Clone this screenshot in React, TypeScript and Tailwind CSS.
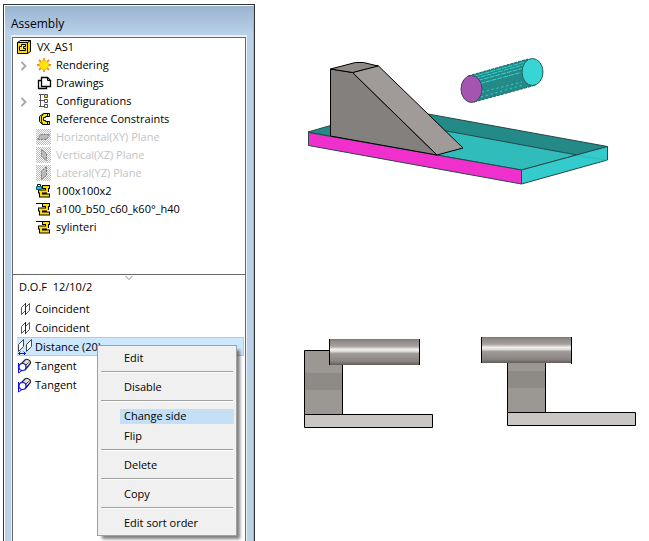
import { ReactNode, useState } from "react";

type IconName =
  | "assembly"
  | "sun"
  | "drawings"
  | "config"
  | "reference"
  | "planeXY"
  | "planeXZ"
  | "planeYZ"
  | "locked"
  | "part"
  | "coincident"
  | "distance"
  | "tangent";

// bent bracket, yellow core over a black outline
const Bracket = () => (
  <g fill="none">
    <path d="M6 4h8M11 4v5M2 8.500h9M5 8.500v4M3 12.500h11" stroke="#000" strokeWidth="4" />
    <path d="M7 4h6M11 4v4.500M3 8.500h9M5 8.500v4M4 12.500h9" stroke="#ffd90a" strokeWidth="2" />
  </g>
);

const Hatch = ({ id, children }: { id: string; children: ReactNode }) => (
  <>
    <defs>
      <pattern id={id} width="2" height="2" patternUnits="userSpaceOnUse">
        <path d="M0 0h1v1H0zM1 1h1v1H1z" fill="#bdbdbd" />
      </pattern>
    </defs>
    <path d="M0 0h15v16H0z" fill={`url(#${id})`} />
    {children}
  </>
);

const icons: Record<IconName, ReactNode> = {
  assembly: (
    <g stroke="#000" fill="#ffd90a">
      <path d="M.5 3.500l3-2h10v11l-3 2H.5z" />
      <path d="M10.500 14.500v-11l3-2M.5 3.500h10" fill="none" />
      <path d="M8.500 5.500h-4v2h-2v4h6v-2h-2v-2h2z" fill="#ffe94a" />
    </g>
  ),
  sun: (
    <>
      <path
        d="M8 1v14M1 8h14M3 3l10 10M13 3L3 13"
        stroke="#ff8a1c"
        strokeWidth="1.8"
      />
      <circle cx="8" cy="8" r="4.5" fill="#ffe900" stroke="#ffb31a" />
    </>
  ),
  drawings: (
    <g fill="#fff" stroke="#000">
      <path d="M2.5 5.500h8v8h-8z" strokeWidth="1.3" />
      <path d="M5.5 2.500h6l3 3v6h-9z" strokeWidth="1.3" />
      <path d="M11.5 2.500v3h3" fill="none" />
    </g>
  ),
  config: (
    <g fill="none" stroke="#555">
      <path d="M3 1.500h5M4.500 1v13M3 7.500h5M3 13.500h5" />
      <path d="M8.500 1.500h3v3h-3z" fill="#e9d91c" />
      <path d="M8.500 6.500h3v3h-3zM8.500 11.500h3v3h-3z" fill="#fff" />
    </g>
  ),
  reference: (
    <>
      <path
        d="M13.500 2.500h-6l-4 3v5l3 3h7v-3h-4v-1h-2v-3h2v-1h4z"
        fill="#f4e900"
        stroke="#000"
      />
      <path d="M7.500 2.500l-2 3v5l1 3M11.500 2.500v3M11.500 10.500v3" fill="none" stroke="#000" />
    </>
  ),
  planeXY: (
    <Hatch id="hatchXY">
      <path d="M1.500 10.500l3-5h9l-3 5z" fill="#bbb" stroke="#777" strokeDasharray="2 1" />
    </Hatch>
  ),
  planeXZ: (
    <Hatch id="hatchXZ">
      <path d="M5.500 2.500v7l5 4v-7z" fill="#bbb" stroke="#777" strokeDasharray="2 1" />
    </Hatch>
  ),
  planeYZ: (
    <Hatch id="hatchYZ">
      <path d="M5.500 6.500v8l5-4v-9z" fill="#bbb" stroke="#777" strokeDasharray="2 1" />
    </Hatch>
  ),
  locked: (
    <>
      <Bracket />
      <path d="M0 0h6v7H0z" fill="#fff" />
      <path d="M1.500 3.500v-2h3v2" fill="none" stroke="#111" />
      <path d="M.5 3.500h5v3h-5z" fill="#22c5cf" stroke="#075f68" />
    </>
  ),
  part: (
    <>
      <Bracket />
      <path d="M0 2.500h7" stroke="#000" />
    </>
  ),
  coincident: (
    <g fill="#fff">
      <path d="M8.500 6.500l4-4v7l-4 4z" stroke="#555" />
      <path d="M4.500 6.500l4-4v7l-4 4z" stroke="#555" />
      <path d="M8.500 2v12" stroke="#1010d8" />
    </g>
  ),
  distance: (
    <g fill="#fff">
      <path d="M1.500 5.500l5-5v7l-5 5zM9.500 5.500l5-5v7l-5 5z" stroke="#444" />
      <path d="M1.500 14.500h7M3.500 12.500l-2 2 2 2M6.500 12.500l2 2-2 2" fill="none" stroke="#1010e8" />
    </g>
  ),
  tangent: (
    <>
      <path
        d="M3 7l5-5c2-2 7 1 5 4l-5 6"
        fill="#ddd"
        stroke="#222"
        strokeWidth="1.2"
      />
      <path d="M11.500 4.500l-4 4" stroke="#444" />
      <path d="M1.500 5v10l10-7" fill="none" stroke="#1010d8" />
      <circle cx="5.500" cy="9" r="3.500" fill="#fff" stroke="#1010d8" strokeWidth="1.2" />
    </>
  ),
};

const Icon = ({ name }: { name: IconName }) => (
  <svg className="h-4 w-4 shrink-0" viewBox="0 0 16 16" aria-hidden="true">
    {icons[name]}
  </svg>
);

interface TreeItem {
  label: string;
  icon: IconName;
  expandable?: boolean;
  disabled?: boolean;
}

const treeItems: TreeItem[] = [
  { label: "Rendering", icon: "sun", expandable: true },
  { label: "Drawings", icon: "drawings" },
  { label: "Configurations", icon: "config", expandable: true },
  { label: "Reference Constraints", icon: "reference" },
  { label: "Horizontal(XY) Plane", icon: "planeXY", disabled: true },
  { label: "Vertical(XZ) Plane", icon: "planeXZ", disabled: true },
  { label: "Lateral(YZ) Plane", icon: "planeYZ", disabled: true },
  { label: "100x100x2", icon: "locked" },
  { label: "a100_b50_c60_k60°_h40", icon: "part" },
  { label: "sylinteri", icon: "part" },
];

const constraints: { label: string; icon: IconName }[] = [
  { label: "Coincident", icon: "coincident" },
  { label: "Coincident", icon: "coincident" },
  { label: "Distance (20)", icon: "distance" },
  { label: "Tangent", icon: "tangent" },
  { label: "Tangent", icon: "tangent" },
];

const menuGroups = [
  ["Edit"],
  ["Disable"],
  ["Change side", "Flip"],
  ["Delete"],
  ["Copy"],
  ["Edit sort order"],
];

const ContextMenu = () => {
  const [active, setActive] = useState("Change side");

  return (
    <div
      role="menu"
      className="absolute top-2 left-20 z-10 w-[140px] border border-[#a0a0a0] bg-[#f0f0f0] py-0.5 shadow-[4px_4px_3px_-1px_rgba(0,0,0,0.5)]"
    >
      {menuGroups.map((group, i) => (
        <div key={group[0]}>
          {i > 0 && (
            <div
              role="separator"
              className="mx-[3px] mt-[3px] mb-1 h-0.5 border-t border-b border-t-[#a0a0a0] border-b-white"
            />
          )}
          {group.map((item) => (
            <button
              key={item}
              type="button"
              role="menuitem"
              onMouseEnter={() => setActive(item)}
              className="flex h-5 w-full items-center pr-0.5 pl-[22px] text-left"
            >
              <span
                className={`flex h-[15px] flex-1 items-center pl-1 ${
                  active === item ? "bg-[#c5dff5]" : ""
                }`}
              >
                {item}
              </span>
            </button>
          ))}
        </div>
      ))}
    </div>
  );
};

const AssemblyTree = () => (
  <ul role="tree" aria-label="Assembly">
    <li role="treeitem" className="flex h-[18px] items-center gap-1 pl-1">
      <Icon name="assembly" />
      VX_AS1
    </li>
    {treeItems.map((item) => (
      <li
        key={item.label}
        role="treeitem"
        className={`flex h-[18px] items-center gap-1 pl-1 ${
          item.disabled ? "text-[#c3c3c3]" : ""
        }`}
      >
        <span className="flex w-[15px] items-center">
          {item.expandable && (
            <button type="button" aria-label={`Expand ${item.label}`}>
              <svg className="h-3 w-3" viewBox="0 0 12 12" fill="none">
                <path d="M4.500 3l4 4-4 4" stroke="#a6a6a6" strokeWidth="1.8" />
              </svg>
            </button>
          )}
        </span>
        <Icon name={item.icon} />
        {item.label}
      </li>
    ))}
  </ul>
);

const ConstraintList = () => {
  const [selected, setSelected] = useState(2);

  return (
    <ul className="pr-px pl-1">
      {constraints.map((item, i) => (
        <li key={i} className="relative">
          <button
            type="button"
            onClick={() => setSelected(i)}
            className={`flex h-[19px] w-full items-center gap-0.5 border-y border-r text-left ${
              selected === i
                ? "border-[#99d1ff] bg-[#cce8ff]"
                : "border-transparent"
            }`}
          >
            <Icon name={item.icon} />
            {item.label}
          </button>
          {selected === i && <ContextMenu />}
        </li>
      ))}
    </ul>
  );
};

const AssemblyView = () => (
  <svg
    className="h-[140px] w-[320px]"
    viewBox="300 50 320 140"
    role="img"
    aria-label="Assembly model"
    strokeLinejoin="round"
  >
    {/* base plate */}
    <g stroke="#24494a">
      <path d="M308 132l76-22 44 4 179.500 32.500L577 155H437l-107-19z" fill="#238a88" />
      <path d="M425 127l152 28-55.500 15L420 152z" fill="#2fbcba" />
      <path d="M521.500 170l86-23.500V160l-86 24z" fill="#34cbcd" />
      <path d="M577 155.500l30 4.500" stroke="#2fbcbe" />
      <path d="M308.500 132.500l213 37.500v14l-213-38.500z" fill="#f030cc" />
    </g>
    {/* wedge */}
    <g stroke="#000">
      <path d="M330.500 69l22 3.500L437 155l-106.500-19z" fill="#83807d" />
      <path d="M352.500 72.500l25.500-7 85 82.500-26 7z" fill="#a09b98" />
      <path d="M330.500 69l25-6.500h8L378 66l-25.500 6.500z" fill="#8e8a87" />
    </g>
    {/* cylinder */}
    <path d="M468 76L528 59l8 26-62 17z" fill="#238a88" />
    <g stroke="#35d3d2" strokeDasharray="5 1">
      <path d="M473 76.500l52-14.500M475 78.500l48-13.500M478 80.500l44-12M480 83.500l41-11" />
      <path d="M482 92l40-10M481 97l42-12" strokeDasharray="2 3" />
    </g>
    <path d="M468 76L528 59M474 102l62-17" stroke="#1b6868" strokeDasharray="3 1" />
    <ellipse cx="532.500" cy="72" rx="10.500" ry="13.500" fill="#37d6d4" stroke="#285e60" />
    <ellipse cx="471.500" cy="89" rx="10.500" ry="13.500" fill="#a355b0" stroke="#51405c" />
  </svg>
);

const SteelGradient = ({ id }: { id: string }) => (
  <linearGradient id={id} x1="0" y1="0" x2="0" y2="1">
    <stop offset="0" stopColor="#77726f" />
    <stop offset="0.05" stopColor="#8c8784" />
    <stop offset="0.28" stopColor="#a6a19e" />
    <stop offset="0.4" stopColor="#f3efec" />
    <stop offset="0.48" stopColor="#dedad7" />
    <stop offset="0.56" stopColor="#a09b98" />
    <stop offset="0.85" stopColor="#8a8582" />
    <stop offset="1" stopColor="#625d5a" />
  </linearGradient>
);

const SideViewBefore = () => (
  <svg
    className="h-[100px] w-[140px]"
    viewBox="300 330 140 100"
    role="img"
    aria-label="Cylinder beside the block edge"
  >
    <defs>
      <SteelGradient id="steelBefore" />
    </defs>
    <path d="M304.500 350.500h38v64h-38z" fill="#9b9894" stroke="#000" />
    <path d="M305 373h37v17h-37z" fill="#8e8a87" />
    <path d="M304.500 414.500h128v13h-128z" fill="#cac6c3" stroke="#000" />
    <path d="M329 339h91v26h-91z" fill="url(#steelBefore)" />
    <path d="M329.500 339v26M419.500 339v26" stroke="#000" />
  </svg>
);

const SideViewAfter = () => (
  <svg
    className="h-[100px] w-[164px]"
    viewBox="476 330 164 100"
    role="img"
    aria-label="Cylinder over the block"
  >
    <defs>
      <SteelGradient id="steelAfter" />
    </defs>
    <path d="M507.500 350.500h38v62h-38z" fill="#9b9894" stroke="#000" />
    <path d="M508 371h37v17h-37z" fill="#8e8a87" />
    <path d="M507.500 412.500h128v13h-128z" fill="#cac6c3" stroke="#000" />
    <path d="M481 337h91v26h-91z" fill="url(#steelAfter)" />
    <path d="M481.500 337v26M571.500 337v27" stroke="#000" />
  </svg>
);

export default function App() {
  return (
    <div className="flex min-h-screen bg-white pl-[3px] font-['Open_Sans','Noto_Sans',sans-serif] text-[11px] leading-4 text-black">
      <aside className="mt-1 flex w-[252px] shrink-0 flex-col border-x border-t border-[#333]">
        <div className="flex flex-1 flex-col border-t border-r border-l border-t-white border-r-[#5cd6f0] border-l-white bg-[#b9d0e9] bg-linear-to-b from-[#9ab4d0] to-[#b9d0e9] to-[28px] px-1.5">
          <h1 className="flex h-[29px] items-center pt-1.5 text-[12px]">
            Assembly
          </h1>
          <div className="flex flex-1 flex-col border-x border-t-2 border-[#f0f0f0]">
            <div className="flex flex-1 flex-col border-x border-t border-[#696969] bg-white">
              <div className="h-[236px]">
                <AssemblyTree />
              </div>
              <section className="relative flex-1 border-t border-[#696969]">
                <svg
                  className="absolute top-0 left-1/2 h-1.5 w-2 -translate-x-1/2"
                  viewBox="0 0 8 6"
                  fill="none"
                  aria-hidden="true"
                >
                  <path d="M.5 1l3.500 3.500L7.500 1" stroke="#888" />
                </svg>
                <h2 className="flex h-5 items-end pl-1.5 whitespace-pre">
                  D.O.F  12/10/2
                </h2>
                <div className="mt-1">
                  <ConstraintList />
                </div>
              </section>
            </div>
          </div>
        </div>
      </aside>
      <main className="flex flex-1 flex-col gap-[140px] pt-[50px] pl-[45px]">
        <AssemblyView />
        <div className="flex gap-9">
          <SideViewBefore />
          <SideViewAfter />
        </div>
      </main>
    </div>
  );
}
